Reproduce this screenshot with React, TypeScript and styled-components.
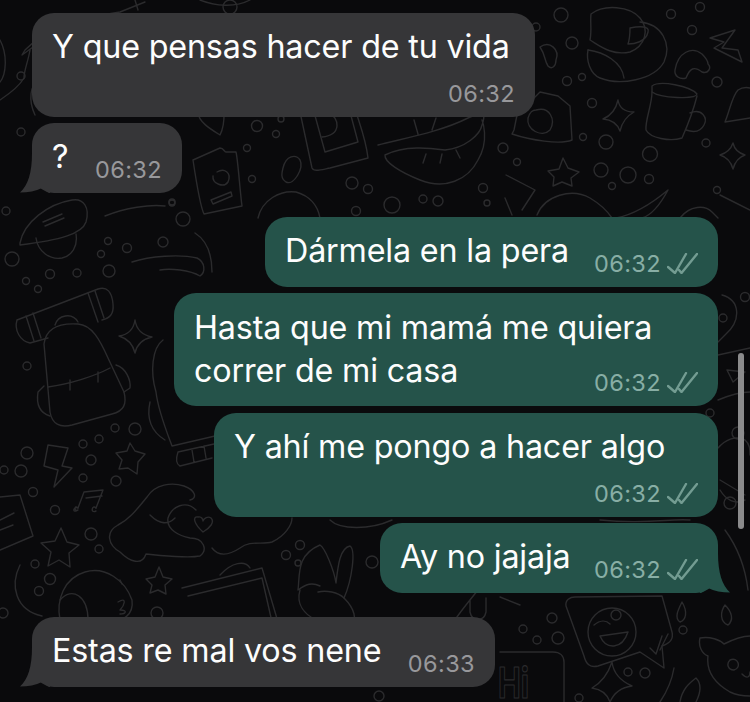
import React from "react";
import styled, { createGlobalStyle } from "styled-components";

const GlobalStyle = createGlobalStyle`
  html, body {
    margin: 0;
    padding: 0;
    background: #0a0a0c;
  }
`;

const Screen = styled.div`
  position: relative;
  width: 750px;
  height: 702px;
  overflow: hidden;
  background: #0a0a0c;
  font-family: Inter, "Liberation Sans", sans-serif;
`;

const Wallpaper = styled.svg`
  position: absolute;
  inset: 0;
  fill: none;
  stroke: #2b2b2d;
  stroke-width: 1.4;
  stroke-linecap: round;
  stroke-linejoin: round;
`;

const Thread = styled.div`
  position: relative;
  display: flex;
  flex-direction: column;
  gap: 24px;
  padding: 13px 32px 0;
`;

const Group = styled.div`
  display: flex;
  flex-direction: column;
  gap: 6px;
`;

const Bubble = styled.div<{ $out?: boolean; $width: number; $row?: boolean; $lead?: number }>`
  position: relative;
  box-sizing: border-box;
  width: ${(p) => p.$width}px;
  margin-top: ${(p) => p.$lead ?? 0}px;
  align-self: ${(p) => (p.$out ? "flex-end" : "flex-start")};
  display: flex;
  flex-direction: ${(p) => (p.$row ? "row" : "column")};
  justify-content: space-between;
  padding: 13px 20px 9px 20px;
  border-radius: 22px;
  background: ${(p) => (p.$out ? "#25534a" : "#363638")};
`;

const Message = styled.div<{ $row?: boolean; $leading?: number }>`
  color: #fdfdfd;
  font-size: 32.3px;
  line-height: ${(p) => p.$leading ?? 41}px;
  letter-spacing: -0.18px;
  white-space: pre;
  padding-bottom: ${(p) => (p.$row ? "7px" : "0")};
`;

const Meta = styled.div<{ $out?: boolean; $offset?: number }>`
  display: flex;
  align-items: center;
  align-self: flex-end;
  gap: 6px;
  height: 30px;
  margin-top: ${(p) => p.$offset ?? 0}px;
  color: ${(p) => (p.$out ? "#88aea5" : "#98989b")};
  font-size: 23.5px;
  letter-spacing: 0.4px;
`;

const Ticks = styled.svg`
  width: 31px;
  height: 21px;
  fill: none;
  stroke: #739c92;
  stroke-width: 2.4;
  stroke-linecap: round;
  stroke-linejoin: round;
`;

const Tail = styled.svg<{ $out?: boolean }>`
  position: absolute;
  bottom: 0;
  width: 30px;
  height: 40px;
  ${(p) => (p.$out ? "right: -12px; transform: scaleX(-1);" : "left: -12px;")}
  fill: ${(p) => (p.$out ? "#25534a" : "#363638")};
`;

const Scrollbar = styled.div`
  position: absolute;
  top: 353px;
  left: 738px;
  width: 5.5px;
  height: 176px;
  border-radius: 3px;
  background: #8b8b8c;
`;

const dots: [number, number, number][] = [
  [6, 211, 4], [183, 219, 7], [172, 203, 3], [108, 241, 3.5], [163, 242, 5], [127, 248, 4.5], [101, 254, 3.5],
  [12, 259, 7], [50, 274, 4.5], [77, 273, 4], [109, 271, 6], [26, 281, 3.5], [38, 289, 3.5], [27, 366, 4],
  [115, 428, 4], [135, 429, 6], [99, 439, 4], [83, 444, 4], [27, 453, 6], [91, 460, 5], [4, 470, 4], [21, 471, 6],
  [83, 478, 4], [116, 481, 5], [33, 492, 4.5], [55, 510, 4.5], [91, 534, 6], [99, 549, 4], [35, 564, 4],
  [50, 579, 5.5], [39, 591, 4.5], [21, 76, 4], [21, 132, 4], [257, 126, 5.5], [276, 134, 3.5], [281, 119, 3],
  [247, 148, 3.5], [252, 179, 3.5], [352, 183, 6], [368, 189, 4.5], [172, 202, 3], [230, 7, 7],
  [561, 15, 7], [700, 7, 4.5], [671, 14, 4.5], [692, 30, 4.5], [572, 43, 6], [536, 27, 4], [567, 81, 4.5],
  [582, 77, 3.5], [717, 82, 5], [592, 103, 4.5], [583, 137, 3.5], [606, 142, 7], [706, 143, 4], [650, 154, 7.5],
  [503, 148, 5], [517, 162, 3.5], [601, 170, 7], [628, 175, 8], [649, 179, 4.5], [612, 186, 3.5], [717, 190, 3.5],
  [392, 205, 8], [423, 199, 4], [438, 201, 5], [483, 188, 4.5], [487, 203, 3], [356, 211, 4.5],
  [300, 545, 4.5], [286, 555, 4.5], [298, 563, 3], [372, 562, 6], [157, 613, 6], [3, 613, 5],
  [552, 618, 5], [523, 629, 4], [537, 640, 4], [558, 638, 6], [683, 630, 4], [628, 672, 4], [645, 673, 5],
  [579, 698, 4], [379, 696, 5], [723, 318, 4], [745, 297, 4.5], [710, 413, 4], [738, 433, 6], [730, 503, 6],
];

const doodles: string[] = [
  // scooter top left
  "M20 243 C24 222 48 204 72 200 C84 198 90 208 86 222 C82 234 60 240 20 245 Z",
  "M36 238 C38 252 50 260 62 258 C72 256 78 246 76 234",
  "M43 222 L62 214 M45 226 L64 218",
  "M105 216 C125 208 150 204 165 206",
  // wheel and handlebar
  "M132 262 C150 256 180 254 197 258 C205 262 206 272 200 276 C190 270 170 268 160 270",
  "M195 233 C206 240 212 254 212 272",
  // backpack and its roll
  "M44 344 C46 326 62 323 78 324 C92 325 100 340 108 358 L124 392 C127 404 124 411 112 414 L72 425 C60 428 52 424 50 412 Z",
  "M17 320 L98 289 C107 286 112 292 113 304 C114 314 110 318 102 320 M17 320 C14 330 20 341 30 343 L48 338",
  "M88 293 L98 322 M95 291 L104 318 M26 316 L34 341 M33 313 L41 338",
  "M55 325 C58 315 72 312 78 322",
  "M48 387 C70 384 95 376 110 368 M70 380 L70 390 M98 372 L98 382",
  "M44 386 L38 392 C36 405 40 413 50 416 M116 365 C126 368 131 380 130 388 L124 392",
  // four point stars
  "M135 320 Q137 334 152 337 Q138 340 135 353 Q132 340 119 336 Q133 334 135 320 Z",
  "M618 100 Q620 112 634 112 Q623 118 620 131 Q616 120 603 119 Q615 114 618 100 Z",
  "M733 143 Q735 152 745 155 Q736 158 733 169 Q730 158 720 155 Q730 152 733 143 Z",
  "M612 662 Q614 678 632 686 Q616 688 610 702 Q606 690 592 688 Q606 680 612 662 Z",
  // robot with shoe
  "M163 340 C152 348 150 372 156 392 C158 410 166 430 172 446 L215 436",
  "M150 402 C146 420 152 432 165 440",
  "M178 452 L214 444 M180 466 L212 458 M178 452 C176 458 176 464 180 466 M192 450 L194 462 M204 446 L206 458",
  // lightning bolts
  "M48 445 L68 448 L62 466 L72 468 L54 487 L58 470 L44 466 Z",
  "M710 38 L735 30 L722 48 L738 50 L742 62 L714 48 L724 42 Z",
  // music notes
  "M84 492 L103 490 L96 508 M84 492 L78 508 M86 498 L102 496",
  "M78 508 C74 504 74 512 78 510 C72 514 73 506 78 508 M96 508 C92 504 90 514 96 511",
  // five point stars
  "M61 528 L67 542 L79 545 L69 553 L70 567 L59 560 L48 566 L51 552 L41 543 L55 541 Z",
  "M159 567 L163 577 L172 579 L165 585 L166 594 L158 590 L150 593 L152 585 L146 579 L155 577 Z",
  "M563 158 L568 168 L579 172 L571 178 L572 186 L562 182 L553 186 L554 177 L548 171 L559 169 Z",
  "M130 443 L135 451 L145 454 L138 462 L137 474 L128 468 L119 469 L122 460 L116 453 L127 451 Z",
  // note sheet
  "M0 497 L20 495 L33 536 L0 550 M0 520 L14 513 M0 530 L13 525",
  // waving hand and heart
  "M147 497 C155 484 172 482 184 486 C195 490 198 498 190 500 M147 497 C135 512 128 520 118 525 C105 532 108 545 120 552 C130 562 142 566 146 554 C162 556 190 558 200 556 C208 550 204 538 190 538 C180 536 166 530 168 518 C172 506 186 500 196 510",
  "M203 532 C194 524 192 516 198 517 C202 516 203 520 203 521 C204 518 208 516 211 518 C215 522 210 528 203 532 Z",
  "M212 548 C218 556 228 556 240 548 C250 540 262 545 272 542 C285 536 292 525 292 518",
  // dog
  "M60 620 C56 600 64 578 85 572 C105 566 125 580 132 600 C134 615 122 622 112 620",
  "M60 600 C72 586 88 596 88 620",
  "M20 565 C10 585 15 610 42 616 M120 580 L122 584",
  "M118 602 C128 596 124 606 120 610 C128 610 126 614 120 614",
  // photo card
  "M182 588 L262 568 L278 622 M188 596 L262 578 L272 622",
  "M220 575 C232 562 245 560 250 568",
  // peace hand
  "M298 590 C300 575 296 555 320 545 C325 548 334 570 336 583 C338 565 340 548 350 546 C356 550 352 580 344 598 C356 610 356 620 352 624 M298 590 C306 584 312 582 320 586 M300 590 C296 604 304 614 316 620",
  "M318 592 C326 590 338 592 344 598",
  // emoji speech bubble
  "M575 597 L662 596 L672 632 C674 640 668 644 662 646 L664 668 L640 652 L598 666 C590 668 586 664 584 656 L566 606 C565 600 570 597 575 597 Z",
  "M594 625 C600 620 606 620 610 624",
  "M600 636 C606 650 622 650 628 632 Z",
  "M650 648 L656 654 L662 636 M660 650 L668 634",
  // water drops
  "M682 602 C678 610 674 618 680 622 C686 620 688 612 682 602 Z M725 605 C720 612 720 622 728 625 C734 620 732 612 725 605 Z",
  // cat
  "M700 638 C710 636 720 640 724 644 C732 640 742 636 750 636 M700 638 C698 646 702 654 708 656 C706 672 716 684 730 692 C738 696 744 696 750 696",
  "M730 660 C738 656 742 668 734 670 C728 670 726 664 730 660 Z M742 674 C748 680 750 676 750 672",
  // hi box
  "M500 652 L553 652 C560 652 564 656 564 662 L564 702",
  // peace hand bottom
  "M660 702 C668 690 672 680 674 668 M680 702 C682 690 688 684 696 678 C702 684 700 694 696 702",
  // mug
  "M652 86 C660 80 690 86 697 94 C696 100 660 98 652 92 Z",
  "M652 92 C652 105 645 120 646 130 C650 138 670 142 682 138 C690 120 694 108 697 96",
  "M690 113 C702 108 708 118 704 125 C700 133 692 132 686 130",
  // camera
  "M514 130 L520 100 L534 98 L540 92 L558 96 L570 106 L572 140 C560 145 530 140 512 134 Z",
  "M536 110 C550 106 556 120 550 130 C542 138 526 130 528 118 C530 112 532 110 536 110 Z",
  // moon and leaf
  "M591 14 C604 4 630 6 640 18 C650 30 645 46 630 52 C612 56 600 46 590 40 C592 30 590 22 591 14 Z",
  "M640 22 C662 24 672 44 664 62 C654 80 620 86 600 78 C590 74 586 60 588 50",
  "M588 50 C604 52 622 62 624 78",
  "M630 28 C640 26 650 26 648 32 C646 42 634 44 628 44 C630 38 630 32 630 28 Z",
  // comma and whale
  "M540 47 C550 40 560 50 556 60 C556 66 552 70 548 66 C544 60 546 56 540 47 Z",
  "M675 70 C678 52 692 46 702 54 C708 60 708 62 708 64 C712 68 708 74 702 72 C694 66 690 68 686 78 C680 80 674 76 675 70 Z",
  "M720 195 L750 210",
  // bell
  "M725 122 C730 110 732 96 738 90 C744 86 750 88 750 88 M725 122 L750 118",
  // leaves and hat
  "M506 175 L535 190 L522 210 M505 198 L512 215",
  "M537 215 C545 195 572 188 590 198 C600 204 608 212 612 218",
  "M616 218 C632 215 650 205 668 190 C660 205 652 215 642 218",
  "M680 218 C690 205 705 205 712 212 L718 218",
  // phone and lips
  "M300 112 L312 168 C314 172 320 170 330 168 L368 158 C366 140 360 125 356 112",
  "M314 112 L325 152 L358 142 L350 112",
  "M328 112 C340 118 342 135 322 137",
  "M378 145 C405 138 440 132 468 118 C476 115 482 112 482 110 M432 130 L436 118 M418 134 L414 120",
  "M385 155 C405 145 430 148 445 150 C465 148 480 135 482 125 C486 115 482 112 482 112 M385 155 C384 162 400 172 420 180 C445 190 468 180 478 160 C490 140 482 120 482 120",
  "M423 163 L426 154 M440 163 L442 154 M456 150 L460 158",
  // hearts and cards
  "M198 112 C198 122 212 130 220 135 C225 125 224 115 224 110",
  "M193 160 L220 148 C224 148 224 152 226 152 L236 152 C238 160 240 192 242 206 L204 214 C200 206 196 180 193 160 Z",
  "M217 172 C224 168 232 172 228 182 C224 188 212 184 213 176 M211 200 L231 192 L232 196 L213 204 Z",
  // egg and arcs
  "M283 168 C286 155 296 154 300 160 C304 168 294 186 286 182 C280 178 282 172 283 168 Z",
  "M258 218 C262 200 280 190 296 192 C310 196 318 206 320 218",
  // top left fragments
  "M25 50 C45 30 70 20 120 12 L145 2 M25 50 L22 55 L40 42",
  "M0 100 C12 92 20 85 24 78 C24 70 28 62 30 50 M0 40 C8 55 6 75 0 82",
  "M35 115 C28 100 30 85 40 78",
  "M135 0 L138 10 M200 0 C215 6 235 8 250 0",
  // right side shapes
  "M722 295 C740 300 742 320 725 335 L718 342 M718 355 L750 348",
  "M727 370 L745 372 L733 382 Z M718 400 C730 395 742 392 750 392",
  "M718 448 C725 440 735 435 745 440 C750 444 750 450 750 455 M740 440 L740 470",
  "M720 480 L745 495 M720 490 C726 500 735 505 745 500",
  "M725 530 C736 545 745 565 748 590",
  // under green bubbles
  "M455 620 C460 612 470 600 478 590 M470 600 L470 612 C472 622 484 622 486 612 L486 598",
  "M500 597 L520 605",
  "M600 520 C650 525 670 518 690 520",
  "M330 520 C340 530 370 530 392 520",
  "M202 400 C215 402 225 402 230 398 M150 515 C160 525 168 525 175 518",
];

const WallpaperArt = () => (
  <Wallpaper width={750} height={702} viewBox="0 0 750 702" aria-hidden="true">
    {dots.map(([cx, cy, r]) => (
      <circle key={`${cx}-${cy}`} cx={cx} cy={cy} r={r} />
    ))}
    {doodles.map((d) => (
      <path key={d} d={d} />
    ))}
    {/* winking face */}
    <circle cx="612" cy="632" r="24" />
    <circle cx="616" cy="615" r="5" />
    <text
      x="498"
      y="698"
      fontFamily="Inter, sans-serif"
      fontSize="42"
      fontWeight="700"
      strokeWidth="1.2"
      textLength={31}
      lengthAdjust="spacingAndGlyphs"
    >
      Hi
    </text>
  </Wallpaper>
);

const DoubleCheck = () => (
  <Ticks viewBox="0 0 31 21">
    <path d="M1 14 L8 20 L19 1" />
    <path d="M12 17 L14.5 20 L30 1" />
  </Ticks>
);

const BubbleTail = ({ out }: { out?: boolean }) => (
  <Tail $out={out} viewBox="0 0 30 40">
    <path d="M12 0 C12 20 8 32 0 39.5 C8 39.5 16 38 22 35 C26 38 28 40 30 40 L30 0 Z" />
  </Tail>
);

type Item = {
  text: string;
  width: number;
  out?: boolean;
  row?: boolean;
  time?: string;
  offset?: number;
  lead?: number;
  leading?: number;
  tail?: boolean;
};

const groups: Item[][] = [
  [
    { text: "Y que pensas hacer de tu vida", width: 503, offset: 11 },
    { text: "?", width: 150, row: true, tail: true },
  ],
  [
    { text: "Dármela en la pera", width: 453, out: true, row: true },
    { text: "Hasta que mi mamá me quiera\ncorrer de mi casa", width: 544, out: true, offset: -25, leading: 43 },
    { text: "Y ahí me pongo a hacer algo", width: 504, out: true, offset: 11, lead: 1 },
    { text: "Ay no jajaja", width: 338, out: true, row: true, tail: true },
  ],
  [{ text: "Estas re mal vos nene", width: 463, row: true, tail: true, time: "06:33" }],
];

export default function App() {
  return (
    <Screen>
      <GlobalStyle />
      <WallpaperArt />
      <Thread>
        {groups.map((items) => (
          <Group key={items[0].text}>
            {items.map((m) => (
              <Bubble key={m.text} $out={m.out} $width={m.width} $row={m.row} $lead={m.lead}>
                {m.tail && <BubbleTail out={m.out} />}
                <Message $row={m.row} $leading={m.leading}>
                  {m.text}
                </Message>
                <Meta $out={m.out} $offset={m.offset}>
                  {m.time ?? "06:32"}
                  {m.out && <DoubleCheck />}
                </Meta>
              </Bubble>
            ))}
          </Group>
        ))}
      </Thread>
      <Scrollbar />
    </Screen>
  );
}
